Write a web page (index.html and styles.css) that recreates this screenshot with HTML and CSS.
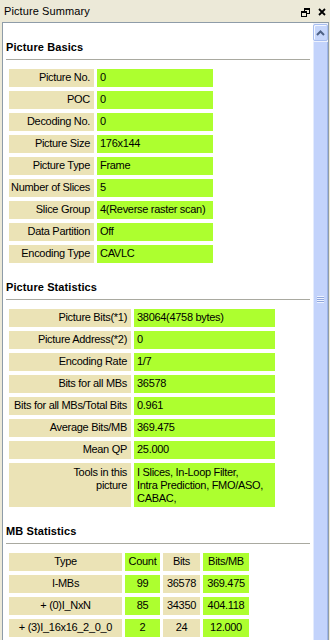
FILE: index.html
```html
<!DOCTYPE html>
<html lang="en">
<head>
  <meta charset="UTF-8">
  <meta name="viewport" content="width=device-width, initial-scale=1">
  <title>Picture Summary</title>
  <link rel="stylesheet" href="styles.css">
</head>

<body>
  <div class="titlebar">
    <span class="title">Picture Summary</span>
    <span class="tools">
      <svg class="btn-restore" width="9" height="9" viewBox="0 0 9 9">
        <rect x="3" y="0" width="6" height="2"/>
        <rect x="8" y="0" width="1" height="6"/>
        <rect x="6" y="5" width="3" height="1"/>
        <rect x="3" y="0" width="1" height="3"/>
        <rect x="0" y="3" width="6" height="2"/>
        <rect x="0" y="3" width="1" height="6"/>
        <rect x="5" y="3" width="1" height="6"/>
        <rect x="0" y="8" width="6" height="1"/>
      </svg>
      <svg class="btn-close" width="8" height="8" viewBox="0 0 8 8">
        <path d="M1 1L7 7M7 1L1 7"/>
      </svg>
    </span>
  </div>

  <div class="panel">
    <div class="content">

      <h2>Picture Basics</h2>
      <hr>
      <table class="kv basics">
        <colgroup><col class="k"><col class="v"></colgroup>
        <tr><td class="key">Picture No.</td><td class="val">0</td></tr>
        <tr><td class="key">POC</td><td class="val">0</td></tr>
        <tr><td class="key">Decoding No.</td><td class="val">0</td></tr>
        <tr><td class="key">Picture Size</td><td class="val">176x144</td></tr>
        <tr><td class="key">Picture Type</td><td class="val">Frame</td></tr>
        <tr><td class="key">Number of Slices</td><td class="val">5</td></tr>
        <tr><td class="key">Slice Group</td><td class="val">4(Reverse raster scan)</td></tr>
        <tr><td class="key">Data Partition</td><td class="val">Off</td></tr>
        <tr><td class="key">Encoding Type</td><td class="val">CAVLC</td></tr>
      </table>

      <h2>Picture Statistics</h2>
      <hr>
      <table class="kv stats">
        <colgroup><col class="k"><col class="v"></colgroup>
        <tr><td class="key">Picture Bits(*1)</td><td class="val">38064(4758 bytes)</td></tr>
        <tr><td class="key">Picture Address(*2)</td><td class="val">0</td></tr>
        <tr><td class="key">Encoding Rate</td><td class="val">1/7</td></tr>
        <tr><td class="key">Bits for all MBs</td><td class="val">36578</td></tr>
        <tr><td class="key">Bits for all MBs/Total Bits</td><td class="val">0.961</td></tr>
        <tr><td class="key">Average Bits/MB</td><td class="val">369.475</td></tr>
        <tr><td class="key">Mean QP</td><td class="val">25.000</td></tr>
        <tr class="tall">
          <td class="key">Tools in this<br>picture</td>
          <td class="val">I Slices, In-Loop Filter,<br>Intra Prediction, FMO/ASO,<br>CABAC,</td>
        </tr>
      </table>

      <h2>MB Statistics</h2>
      <hr>
      <table class="kv mb">
        <colgroup><col class="c-type"><col class="c-count"><col class="c-bits"><col class="c-avg"></colgroup>
        <tr><td class="key">Type</td><td class="val">Count</td><td class="key">Bits</td><td class="val">Bits/MB</td></tr>
        <tr><td class="key">I-MBs</td><td class="val">99</td><td class="key">36578</td><td class="val">369.475</td></tr>
        <tr><td class="key">+ (0)I_NxN</td><td class="val">85</td><td class="key">34350</td><td class="val">404.118</td></tr>
        <tr><td class="key">+ (3)I_16x16_2_0_0</td><td class="val">2</td><td class="key">24</td><td class="val">12.000</td></tr>
      </table>

    </div>

    <div class="scrollbar">
      <div class="sb-up">
        <svg width="9" height="6" viewBox="0 0 9 6"><path d="M1 5L4.5 1.5L8 5"/></svg>
      </div>
      <div class="sb-thumb">
        <div class="grip"></div>
      </div>
    </div>
  </div>
</body>
</html>
```

FILE: styles.css
```css
* {
  box-sizing: border-box;
}

body {
  margin: 0;
  height: 640px;
  overflow: hidden;
  background: #ece9d8;
  font-family: "Liberation Sans", Arial, sans-serif;
  font-size: 11px;
  color: #000;
}

.titlebar {
  display: flex;
  justify-content: space-between;
  align-items: center;
  height: 22px;
  padding: 0 4px 0 4px;
}

.title {
  font-size: 11px;
  letter-spacing: 0.1px;
}

.tools {
  display: flex;
  align-items: center;
  gap: 8px;
  padding-top: 2px;
}

.btn-restore rect {
  fill: #000;
}

.btn-close path {
  stroke: #000;
  stroke-width: 1.8;
  fill: none;
}

.panel {
  display: flex;
  height: 618px;
  margin: 0 1px 0 2px;
  border: 1px solid #8e9ca8;
  border-bottom: none;
  background: #fff;
}

.content {
  flex: 1;
  padding: 17px 3px 0 3px;
  overflow: hidden;
}

h2 {
  margin: 0 0 5px 0;
  font-size: 11px;
  line-height: 14px;
  font-weight: bold;
  letter-spacing: 0.1px;
}

hr {
  margin: 0;
  height: 1px;
  border: none;
  background: #a9a9a0;
}

.kv {
  table-layout: fixed;
  border-collapse: separate;
  border-spacing: 3px 4px;
  margin: 5px 0 13px 0;
  line-height: 13px;
  letter-spacing: -0.3px;
}

.kv td {
  padding: 2px 3px 3px 3px;
  white-space: nowrap;
  overflow: hidden;
}

.kv .key {
  background: #ebe3b6;
  text-align: right;
  padding-right: 4px;
  padding-left: 1px;
}

.kv .val {
  background: #adff2f;
}

.kv .tall td {
  vertical-align: top;
  padding-top: 3px;
  padding-bottom: 2px;
}

.basics {
  width: 210px;
}

.basics .k {
  width: 85px;
}

.basics .v {
  width: 116px;
}

.stats {
  width: 272px;
}

.stats .k {
  width: 122px;
}

.stats .v {
  width: 141px;
}

.mb {
  width: 243px;
}

.mb td,
.mb .key {
  text-align: center;
  padding-left: 0;
  padding-right: 0;
}

.mb .c-type {
  width: 113px;
}

.mb .c-count {
  width: 35px;
}

.mb .c-bits {
  width: 37px;
}

.mb .c-avg {
  width: 46px;
}

.scrollbar {
  width: 15px;
  display: flex;
  flex-direction: column;
  padding-top: 1px;
  background: #eef2fc;
}

.sb-up {
  height: 17px;
  display: flex;
  align-items: center;
  justify-content: center;
  background: #c6d6fb;
  border: 1px solid #a8bef0;
  border-radius: 2px;
  box-shadow: inset 1px 1px 0 #f4f7ff;
}

.sb-up path {
  fill: none;
  stroke: #4d6185;
  stroke-width: 2;
}

.sb-thumb {
  flex: 1;
  margin-top: 1px;
  background: #c3d3fb;
  border-left: 1px solid #e3ebfd;
  border-right: 1px solid #9fb5ea;
  display: flex;
  flex-direction: column;
  align-items: center;
  padding-top: 254px;
}

.grip {
  width: 7px;
  height: 7px;
  background: repeating-linear-gradient(#eef3ff 0 1px, #8fa6dc 1px 2px);
}
```
